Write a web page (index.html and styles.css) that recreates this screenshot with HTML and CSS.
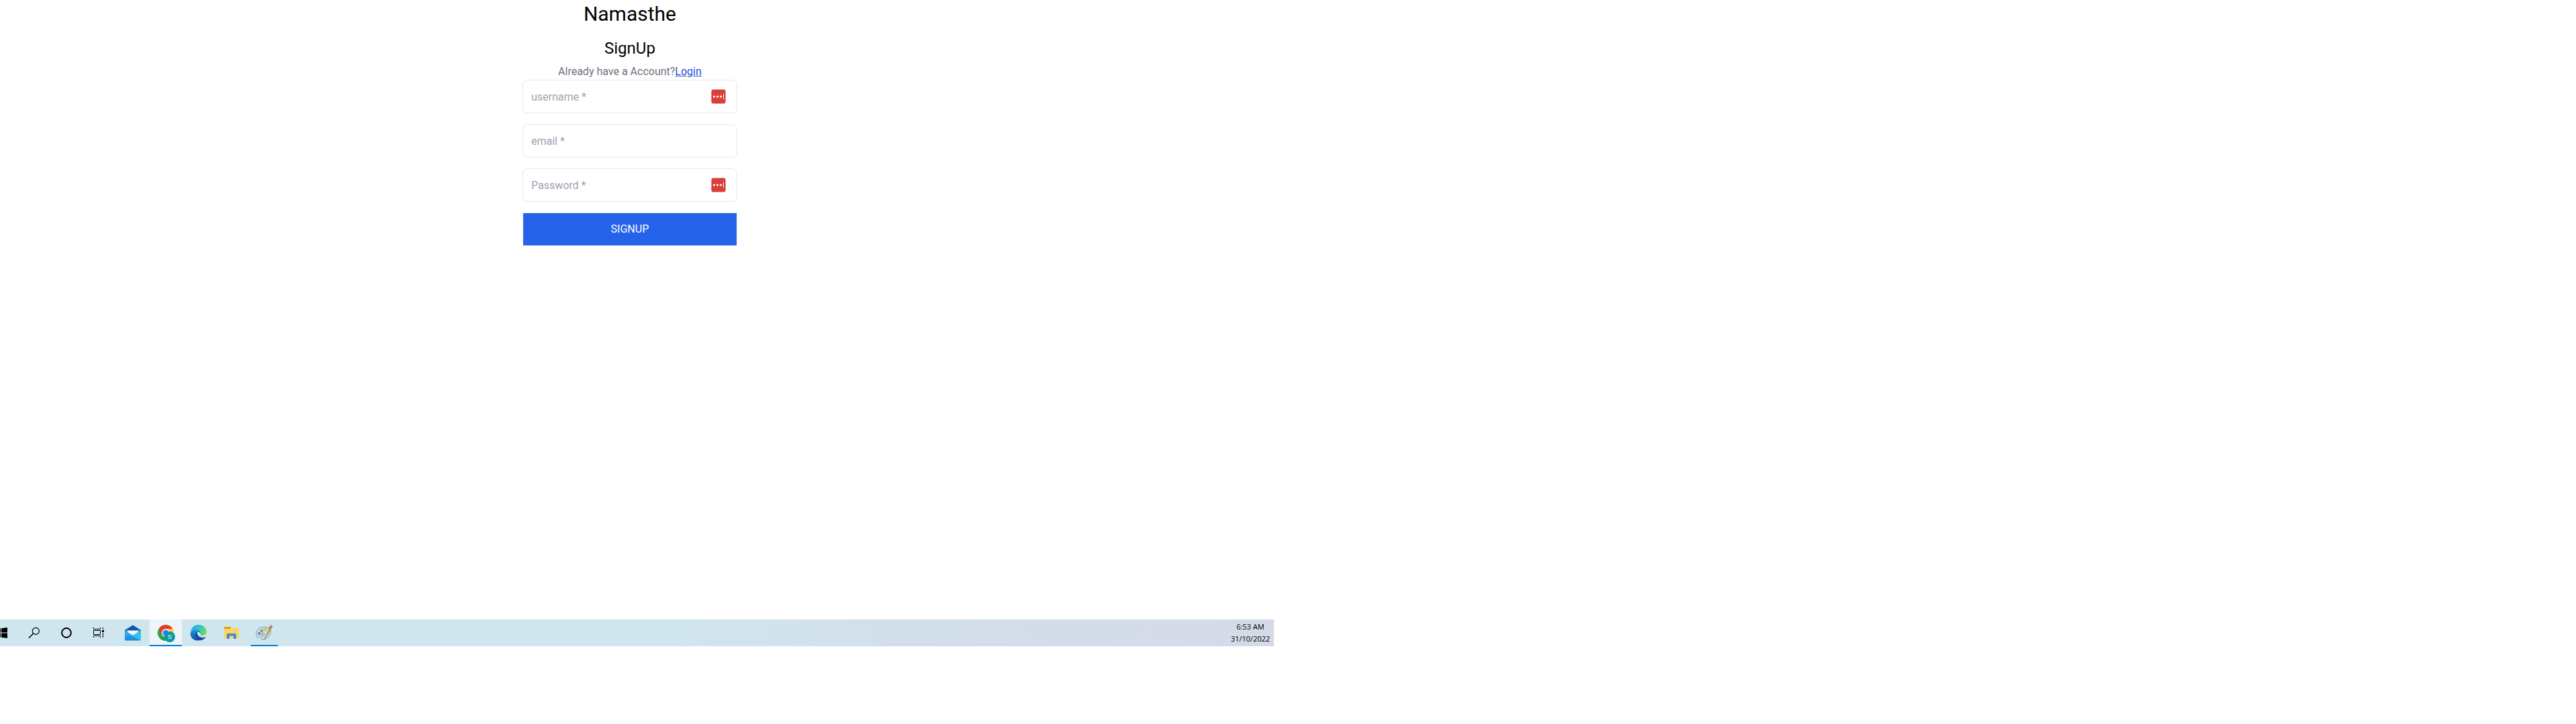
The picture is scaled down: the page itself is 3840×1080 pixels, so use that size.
FILE: index.html
```html
<!DOCTYPE html>
<html lang="en">
<head>
<meta charset="utf-8">
<title>Namasthe</title>
<link rel="stylesheet" href="styles.css">
</head>
<body>
<div class="screen">
  <main class="page">
    <h1 class="brand">Namasthe</h1>
    <section class="signup">
      <h2 class="title">SignUp</h2>
      <p class="hint">Already have a Account?<a class="link" href="#login">Login</a></p>
      <form class="form">
        <div class="field">
          <input class="input" type="text" placeholder="username *" aria-label="username">
          <svg class="vault" viewBox="0 0 22 22" aria-hidden="true"><rect x=".4" y=".4" width="21.2" height="21.2" rx="3" fill="#d9403a"/><g fill="#fff"><circle cx="4.6" cy="11" r="1.6"/><circle cx="9.6" cy="11" r="1.6"/><circle cx="14.6" cy="11" r="1.6"/><rect x="18" y="7" width="1" height="8"/></g></svg>
        </div>
        <div class="field">
          <input class="input" type="email" placeholder="email *" aria-label="email">
        </div>
        <div class="field">
          <input class="input" type="password" placeholder="Password *" aria-label="Password">
          <svg class="vault" viewBox="0 0 22 22" aria-hidden="true"><rect x=".4" y=".4" width="21.2" height="21.2" rx="3" fill="#d9403a"/><g fill="#fff"><circle cx="4.6" cy="11" r="1.6"/><circle cx="9.6" cy="11" r="1.6"/><circle cx="14.6" cy="11" r="1.6"/><rect x="18" y="7" width="1" height="8"/></g></svg>
        </div>
        <button class="submit" type="button">SIGNUP</button>
      </form>
    </section>
  </main>
  <footer class="taskbar">
    <nav class="apps">
      <button class="app app-start" type="button" aria-label="Start">
        <svg width="11" height="16" viewBox="0 0 11 16"><path d="M0 1.5 1 1.3V7.5H0zM2 1.2 11 0V7.5H2zM0 8.5H1V14.7L0 14.5zM2 8.5H11V16L2 14.8z"/></svg>
      </button>
      <button class="app" type="button" aria-label="Search">
        <svg width="18" height="18" viewBox="0 0 18 18" fill="none" stroke="#000" stroke-width="1.2"><circle cx="11.3" cy="6.4" r="5"/><path d="M7.7 10 1 16.8" stroke-width="1.5"/></svg>
      </button>
      <button class="app" type="button" aria-label="Cortana">
        <svg width="18" height="18" viewBox="0 0 18 18" fill="none" stroke="#000" stroke-width="2"><circle cx="9" cy="9" r="6.9"/></svg>
      </button>
      <button class="app" type="button" aria-label="Task view">
        <svg width="18" height="18" viewBox="0 0 18 18" fill="none" stroke="#000"><path d="M1.5 1V3.5H11.5V1M1.500 16V13.500H11.500V16M1.500 5.500H11.500V11.500H1.500zM15.500 1V4M15.500 9V16"/><path d="M14 5H17V8H14z" fill="#000" stroke="none"/></svg>
      </button>
      <div class="pinned">
        <button class="app" type="button" aria-label="Mail">
          <svg width="24" height="24" viewBox="0 0 24 24"><defs><linearGradient id="mail" x1="0" y1="0" x2="0" y2="1"><stop offset="0" stop-color="#35b5f0"/><stop offset="1" stop-color="#1689dc"/></linearGradient></defs><path d="M0 8 12 .5 24 8V11H0z" fill="#0a5cab"/><path d="M2 8.500H22L12 17z" fill="#f6f6f8"/><path d="M0 8.500 24 23.500H0z" fill="url(#mail)"/><path d="M24 8.500 12 15.500 24 23.500z" fill="#32c3f2"/></svg>
        </button>
        <button class="app app-current" type="button" aria-label="Chrome, profile S">
          <svg width="28" height="28" viewBox="-1 -1 28 28"><path d="M13 13 2.600 7A12 12 0 0 0 13 25L18 16z" fill="#2fa24c"/><path d="M13 7H23.400A12 12 0 0 1 13 25L18 16z" fill="#fcc934"/><path d="M2.600 7A12 12 0 0 1 23.400 7H13L8 16z" fill="#e43b2e"/><circle cx="13" cy="13" r="6" fill="#fff"/><circle cx="13" cy="13" r="4.600" fill="#3b7de9"/><circle cx="19" cy="19" r="8" fill="#0897a7"/><text x="19" y="22" text-anchor="middle" class="badge-text">S</text></svg>
        </button>
        <button class="app" type="button" aria-label="Edge">
          <svg width="24" height="24" viewBox="0 0 24 24"><defs><linearGradient id="edge-top" x1="0" y1=".3" x2="1" y2=".5"><stop offset="0" stop-color="#1fa6df"/><stop offset=".5" stop-color="#2fc3cf"/><stop offset="1" stop-color="#6be04c"/></linearGradient><linearGradient id="edge-left" x1="0" y1="0" x2="0" y2="1"><stop offset="0" stop-color="#1d9be0"/><stop offset="1" stop-color="#0d52a0"/></linearGradient></defs><path d="M.2 10C1.500 4 6 0 12 0 19 0 24 5 24 10 24 14 21 16 18 16 15 16 14 15 14.500 14 16 11 14 8 10 7 5 6 1 8 .2 11z" fill="url(#edge-top)"/><path d="M0 12C1 8 5 6.500 9 7 13 7.500 15.500 10 14.900 13 13 10 10 11 9 13 7 18 12 22 16 22.500 8 26-1 21 0 12z" fill="url(#edge-left)"/><path d="M9.500 10.500C6 14 7 20 12 22.500 16 24.500 21 21.500 23 18 17 21 10 18 9.500 10.500z" fill="#124a94"/></svg>
        </button>
        <button class="app" type="button" aria-label="File Explorer">
          <svg width="22" height="18" viewBox="0 0 22 18"><path d="M0 1.200Q0 0 1 0H9.500Q10.500 1 10.500 2H21Q22 2 22 3V17.500H0z" fill="#fcd462"/><path d="M0 3V1Q0 0 1 0H9Q10.200 0 10.200 1.500 9.500 3 8.500 3z" fill="#dea00c"/><path d="M4 18V11.500Q4 10 5.500 10H16.500Q18 10 18 11.500V18H14V13.500H8V18z" fill="#3d8dd5"/></svg>
        </button>
      </div>
      <button class="app app-open" type="button" aria-label="Paint">
        <svg width="26" height="26" viewBox="0 0 26 26"><path d="M14 4.500C6 3 0 9 1 16 1.500 20 3.500 21 5 19.500 7 18 8 19 8 21 8.500 24 13 23.500 17 21 22 18 25 10 21 7 19 5.200 17 5 14 4.500z" fill="#b9dcf0" stroke="#5b9cc4" stroke-width=".8"/><ellipse cx="11" cy="15.500" rx="2" ry="1.800" fill="#dcebf5" stroke="#4a91c4"/><circle cx="5.500" cy="14" r="2.100" fill="#e05548"/><circle cx="9" cy="10" r="2.200" fill="#5fb35a"/><ellipse cx="14" cy="8" rx="2.600" ry="2" fill="#f2b93b"/><path d="M20 8 12.500 23.500 16 19 22 9z" fill="#f19a35" stroke="#d97a1c" stroke-width=".7"/><path d="M19 7 20 3.500 24 1 25.500 4 22.500 9z" fill="#b98c68"/></svg>
      </button>
    </nav>
    <div class="clock"><time>6:53 AM</time><time>31/10/2022</time></div>
  </footer>
</div>
</body>
</html>
```
FILE: styles.css
```css
* { box-sizing: border-box; margin: 0; padding: 0; }
body { font-family: Roboto, "Liberation Sans", sans-serif; font-size: 16px; line-height: 24px; background: #fff; color: #000; }
.screen { width: 49.45%; min-height: 100vh; padding-bottom: 116px; display: flex; flex-direction: column; }
.page { flex: 1; padding-right: 21px; display: flex; flex-direction: column; align-items: center; gap: 16px; text-align: center; }
.brand { font-size: 30px; line-height: 41px; font-weight: 400; }
.signup { width: 320px; max-width: 100%; }
.title { font-size: 24px; line-height: 30px; font-weight: 400; padding: 0 0 8px; }
.hint { color: #6b7280; }
.link { color: #1d4ed8; }
.form { display: flex; flex-direction: column; gap: 16px; }
.field { position: relative; }
.input, .submit { display: block; width: 100%; height: 50px; border: 1px solid #e5e7eb; font: inherit; }
.input { padding: 0 12px; border-radius: 8px; background: #fff; color: #111827; }
.input::placeholder { color: #9ca3af; opacity: 1; }
.vault { position: absolute; top: 14px; right: 17px; width: 22px; height: 22px; }
.submit { background: #2563eb; color: #fff; }
.taskbar { height: 40px; display: flex; justify-content: space-between; background: linear-gradient(90deg, #d0e6ee 0%, #d0e6ee 50%, #d3dcea 80%, #d5dae8 100%); }
.apps { display: flex; }
.pinned { display: flex; gap: 1px; margin: 0 5px 0 3px; }
.app { width: 48px; height: 40px; border: 0; background: transparent; display: flex; align-items: center; justify-content: center; }
.app-start { width: 27px; justify-content: flex-start; }
.app-current { background: #edf5f9; box-shadow: inset 0 -2px #0078d7; }
.app-open { width: 40px; box-shadow: inset 0 -2px #0078d7; }
.badge-text { font-size: 9px; font-weight: 500; fill: #fff; }
.clock { width: 70px; display: flex; flex-direction: column; align-items: center; padding-top: 2px; font: 11px/18px "Open Sans", "Noto Sans", sans-serif; }
```
